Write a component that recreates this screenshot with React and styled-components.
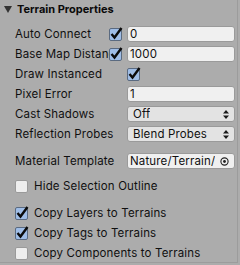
import React from "react";
import styled, { createGlobalStyle } from "styled-components";

const Global = createGlobalStyle`
  html, body { margin: 0; padding: 0; background: #acacac; }
  body { font-family: Inter, "Liberation Sans", sans-serif; }
`;

const Panel = styled.div`
  width: 237px;
  height: 262px;
  background: #acacac;
  border-right: 1px solid #9c9c9c;
  border-bottom: 1px solid #9c9c9c;
  overflow: hidden;
  color: #101010;
  font-size: 11.5px;
  letter-spacing: 0.15px;
`;

const Header = styled.div`
  height: 18px;
  display: flex;
  align-items: center;
  gap: 5px;
  padding-left: 4px;
  font-weight: 700;
  font-size: 11px;
  letter-spacing: 0;
  color: #0a0a0a;
  margin-bottom: 6px;
`;

const Triangle = styled.div`
  width: 0;
  height: 0;
  border-left: 4px solid transparent;
  border-right: 4px solid transparent;
  border-top: 7px solid #333;
`;

const Body = styled.div`
  padding-left: 15px;
  display: flex;
  flex-direction: column;
`;

const Row = styled.div`
  height: 20px;
  display: grid;
  grid-template-columns: 112px 108px;
  align-items: center;
  margin-top: ${(p) => p.$gap || 0}px;
`;

const LabelCell = styled.div`
  display: flex;
  align-items: center;
  min-width: 0;
`;

const Label = styled.div`
  flex: 1;
  min-width: 0;
  white-space: nowrap;
  overflow: hidden;
`;

const Box = styled.div`
  width: 11px;
  height: 11px;
  border: 1px solid ${(p) => (p.$on ? "#5a6a80" : "#9a9a9a")};
  border-radius: 2px;
  background: ${(p) => (p.$on ? "#9fbde6" : "#eeeeee")};
  position: relative;
  flex: none;
  margin-right: ${(p) => p.$mr || 0}px;
`;

const CheckSvg = styled.svg`
  position: absolute;
  left: 0px;
  top: -2px;
  overflow: visible;
`;

const Checkbox = ({ on, mr }) => (
  <Box $on={on} $mr={mr}>
    {on && (
      <CheckSvg width="13" height="13" viewBox="0 0 13 13">
        <path d="M1.5 7 L4.5 10.5 L11.5 1" fill="none" stroke="#0b0b0b" strokeWidth="2.4" strokeLinejoin="miter" strokeLinecap="butt" />
      </CheckSvg>
    )}
  </Box>
);

const Field = styled.div`
  height: 14px;
  box-sizing: content-box;
  border: 1px solid #9a9a9a;
  border-radius: 3px;
  background: ${(p) => (p.$drop ? "#e3e3e3" : "#f0f0f0")};
  display: flex;
  align-items: center;
  padding: 0 5px 0 ${(p) => (p.$drop ? 5 : 2)}px;
  justify-content: space-between;
  white-space: nowrap;
  overflow: hidden;
  color: #101010;
`;

const Text = styled.span`
  overflow: hidden;
`;

const Arrows = () => (
  <svg width="6" height="9" viewBox="0 0 6 9">
    <path d="M3 0 L6 3.5 L0 3.5 Z M0 5.5 L6 5.5 L3 9 Z" fill="#1a1a1a" />
  </svg>
);

const Target = () => (
  <svg width="9" height="9" viewBox="0 0 9 9">
    <circle cx="4.5" cy="4.5" r="3.6" fill="none" stroke="#222" strokeWidth="1.1" />
    <circle cx="4.5" cy="4.5" r="1.4" fill="#222" />
  </svg>
);

const ToggleRow = styled.div`
  height: 20px;
  display: flex;
  align-items: center;
  gap: 6px;
  margin-top: ${(p) => p.$gap || 0}px;
  white-space: nowrap;
`;

export default function App() {
  return (
    <>
      <Global />
      <Panel>
        <Header>
          <Triangle />
          <span>Terrain Properties</span>
        </Header>
        <Body>
          <Row>
            <LabelCell>
              <Label>Auto Connect</Label>
              <Checkbox on mr={5} />
            </LabelCell>
            <Field><Text>0</Text></Field>
          </Row>
          <Row>
            <LabelCell>
              <Label>Base Map Distance</Label>
              <Checkbox on mr={5} />
            </LabelCell>
            <Field><Text>1000</Text></Field>
          </Row>
          <Row>
            <LabelCell><Label>Draw Instanced</Label></LabelCell>
            <div><Checkbox on /></div>
          </Row>
          <Row>
            <LabelCell><Label>Pixel Error</Label></LabelCell>
            <Field><Text>1</Text></Field>
          </Row>
          <Row>
            <LabelCell><Label>Cast Shadows</Label></LabelCell>
            <Field $drop><Text>Off</Text><Arrows /></Field>
          </Row>
          <Row>
            <LabelCell><Label>Reflection Probes</Label></LabelCell>
            <Field $drop><Text>Blend Probes</Text><Arrows /></Field>
          </Row>
          <Row $gap={7}>
            <LabelCell><Label>Material Template</Label></LabelCell>
            <Field><Text>Nature/Terrain/</Text><Target /></Field>
          </Row>
          <ToggleRow $gap={5}>
            <Checkbox />
            <span>Hide Selection Outline</span>
          </ToggleRow>
          <ToggleRow $gap={7}>
            <Checkbox on />
            <span>Copy Layers to Terrains</span>
          </ToggleRow>
          <ToggleRow>
            <Checkbox on />
            <span>Copy Tags to Terrains</span>
          </ToggleRow>
          <ToggleRow>
            <Checkbox />
            <span>Copy Components to Terrains</span>
          </ToggleRow>
        </Body>
      </Panel>
    </>
  );
}
